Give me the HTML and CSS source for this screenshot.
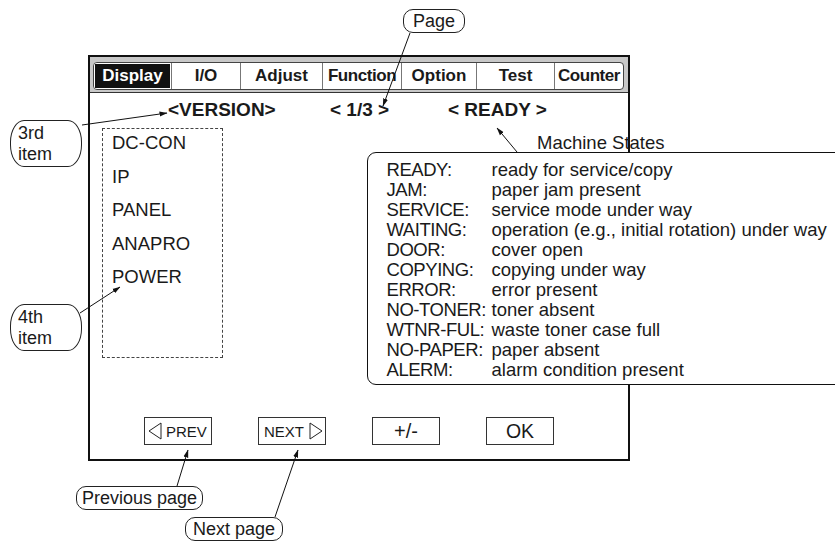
FILE: index.html
```html
<!DOCTYPE html>
<html lang="en">
<head>
    <meta charset="UTF-8">
    <title>Service Mode Display</title>
    <link rel="stylesheet" href="styles.css">
</head>
<body>

<div class="figure">
    <div class="screen">
        <div class="tabband">
            <div class="tabs">
                <div class="tab active w-display">Display</div>
                <div class="tab w-io">I/O</div>
                <div class="tab w-adjust">Adjust</div>
                <div class="tab narrow w-function">Function</div>
                <div class="tab w-option">Option</div>
                <div class="tab w-test">Test</div>
                <div class="tab narrow w-counter">Counter</div>
            </div>
        </div>

        <div class="status">
            <span class="st-item">&lt;VERSION&gt;</span>
            <span class="st-page">&lt; 1/3 &gt;</span>
            <span class="st-state">&lt; READY &gt;</span>
        </div>

        <div class="body">
            <ul class="items">
                <li>DC-CON</li>
                <li>IP</li>
                <li>PANEL</li>
                <li>ANAPRO</li>
                <li>POWER</li>
            </ul>
        </div>

        <div class="keys">
            <div class="key key-prev">
                <svg width="14" height="18" viewBox="0 0 14 18"><polygon points="13,1 1,9 13,17" fill="none" stroke="#222" stroke-width="1"/></svg>
                <span>PREV</span>
            </div>
            <div class="key key-next">
                <span>NEXT</span>
                <svg width="14" height="18" viewBox="0 0 14 18"><polygon points="1,1 13,9 1,17" fill="none" stroke="#222" stroke-width="1"/></svg>
            </div>
            <div class="key key-sign">+/-</div>
            <div class="key key-ok">OK</div>
        </div>
    </div>

    <div class="states-title">Machine States</div>
    <div class="states">
        <span class="lbl">READY:</span><span>ready for service/copy</span>
        <span class="lbl">JAM:</span><span>paper jam present</span>
        <span class="lbl">SERVICE:</span><span>service mode under way</span>
        <span class="lbl">WAITING:</span><span>operation (e.g., initial rotation) under way</span>
        <span class="lbl">DOOR:</span><span>cover open</span>
        <span class="lbl">COPYING:</span><span>copying under way</span>
        <span class="lbl">ERROR:</span><span>error present</span>
        <span class="lbl">NO-TONER:</span><span>toner absent</span>
        <span class="lbl">WTNR-FUL:</span><span>waste toner case full</span>
        <span class="lbl">NO-PAPER:</span><span>paper absent</span>
        <span class="lbl">ALERM:</span><span>alarm condition present</span>
    </div>

    <!-- callouts -->
    <div class="callout c-page">Page</div>
    <div class="callout tall c-third">3rd<br>item</div>
    <div class="callout tall c-fourth">4th<br>item</div>
    <div class="callout c-prev">Previous page</div>
    <div class="callout c-next">Next page</div>

    <svg class="leaders" width="835" height="541" viewBox="0 0 835 541">
        <defs>
            <marker id="head" markerWidth="8" markerHeight="6" refX="7.5" refY="3" orient="auto" markerUnits="userSpaceOnUse">
                <path d="M0,0.5 L8,3 L0,5.5 Z" fill="#111"/>
            </marker>
        </defs>
        <g stroke="#111" stroke-width="1" marker-end="url(#head)">
            <line x1="410" y1="33" x2="383" y2="106"/>
            <line x1="82" y1="125" x2="167" y2="113"/>
            <line x1="80" y1="313" x2="120" y2="287"/>
            <line x1="517" y1="152" x2="497" y2="128"/>
            <line x1="177" y1="486" x2="188" y2="450"/>
            <line x1="275" y1="517" x2="298" y2="450"/>
        </g>
    </svg>
</div>

</body>
</html>
```

FILE: styles.css
```css
body {
    margin: 0;
    background-color: #fff;
    color: #1a1a1a;
    font-family: "Liberation Sans", Arial, sans-serif;
}
.figure {
    position: relative;
    width: 835px;
    height: 541px;
    overflow: hidden;
    box-sizing: border-box;
    padding: 55px 0 0 88px;
}

/* the panel screen */
.screen {
    width: 542px;
    height: 406px;
    box-sizing: border-box;
    border: 2px solid #111;
    display: flex;
    flex-direction: column;
}
.tabband {
    background-color: #c8c8c8;
    padding: 5px 4px 2px 3px;
    border-bottom: 1px solid #333;
}
.tabs {
    display: flex;
    height: 28px;
    box-sizing: border-box;
    border: 1px solid #444;
    border-radius: 4px;
    background-color: #fff;
    overflow: hidden;
}
.tab {
    box-sizing: border-box;
    border-left: 1px solid #777;
    display: flex;
    align-items: center;
    justify-content: center;
    font-weight: bold;
    font-size: 17px;
    white-space: nowrap;
}
.tab.narrow {
    letter-spacing: -0.45px;
}
.tab.active {
    border-left: none;
    background-color: #111;
    color: #fff;
    box-shadow: inset 0 0 0 1px #fff;
}
.w-display { width: 77px; }
.w-io { width: 69px; }
.w-adjust { width: 82px; }
.w-function { width: 79px; }
.w-option { width: 75px; }
.w-test { width: 78px; }
.w-counter { width: 69px; }

.status {
    display: flex;
    padding: 4px 0 0 78px;
    font-weight: bold;
    font-size: 19px;
    line-height: 26px;
    white-space: nowrap;
}
.st-item { width: 162px; }
.st-page { width: 118px; }

.body {
    flex: 1;
    padding-left: 12px;
}
.items {
    list-style: none;
    margin: 5px 0 0 0;
    padding: 1px 0 0 9px;
    width: 121px;
    height: 230px;
    box-sizing: border-box;
    border: 1px dashed #444;
    display: flex;
    flex-direction: column;
    gap: 7.5px;
    font-size: 18.5px;
    line-height: 26px;
}

.keys {
    display: flex;
    gap: 46px;
    padding-left: 54px;
    margin-bottom: 14px;
}
.key {
    width: 68px;
    height: 28px;
    box-sizing: border-box;
    border: 1px solid #333;
    display: flex;
    align-items: center;
    justify-content: center;
    font-size: 20px;
}
.key svg {
    display: block;
}
.key-prev {
    justify-content: flex-start;
    padding-left: 3px;
    gap: 4px;
    font-size: 15px;
}
.key-next {
    justify-content: flex-start;
    padding-left: 5px;
    gap: 5px;
    font-size: 15px;
}
.key-ok {
    font-size: 19.5px;
}

/* machine states legend */
.states-title {
    position: absolute;
    left: 537px;
    top: 133px;
    font-size: 18.5px;
    line-height: 20px;
}
.states {
    position: absolute;
    left: 367px;
    top: 152px;
    width: 500px;
    height: 233px;
    box-sizing: border-box;
    border: 1.5px solid #111;
    border-radius: 9px;
    background-color: #fff;
    padding: 7px 0 0 18.5px;
    display: grid;
    grid-template-columns: 105px auto;
    align-content: start;
    font-size: 18.5px;
    line-height: 20px;
    white-space: nowrap;
}
.states .lbl {
    letter-spacing: -0.45px;
}

/* callouts */
.callout {
    position: absolute;
    box-sizing: border-box;
    border: 1.3px solid #222;
    border-radius: 10px;
    background-color: #fff;
    font-size: 18px;
    line-height: 22px;
    text-align: center;
    white-space: nowrap;
}
.callout.tall {
    text-align: left;
    padding: 2px 0 0 7px;
    line-height: 21px;
    border-radius: 14px / 22px;
}
.c-page { left: 403px; top: 9px; width: 62px; height: 24px; }
.c-third { left: 10px; top: 120px; width: 72px; height: 47px; }
.c-fourth { left: 10px; top: 304px; width: 72px; height: 47px; }
.c-prev { left: 76px; top: 486px; width: 127px; height: 24px; }
.c-next { left: 185px; top: 517px; width: 98px; height: 24px; }

.leaders {
    position: absolute;
    left: 0;
    top: 0;
    pointer-events: none;
}
```
